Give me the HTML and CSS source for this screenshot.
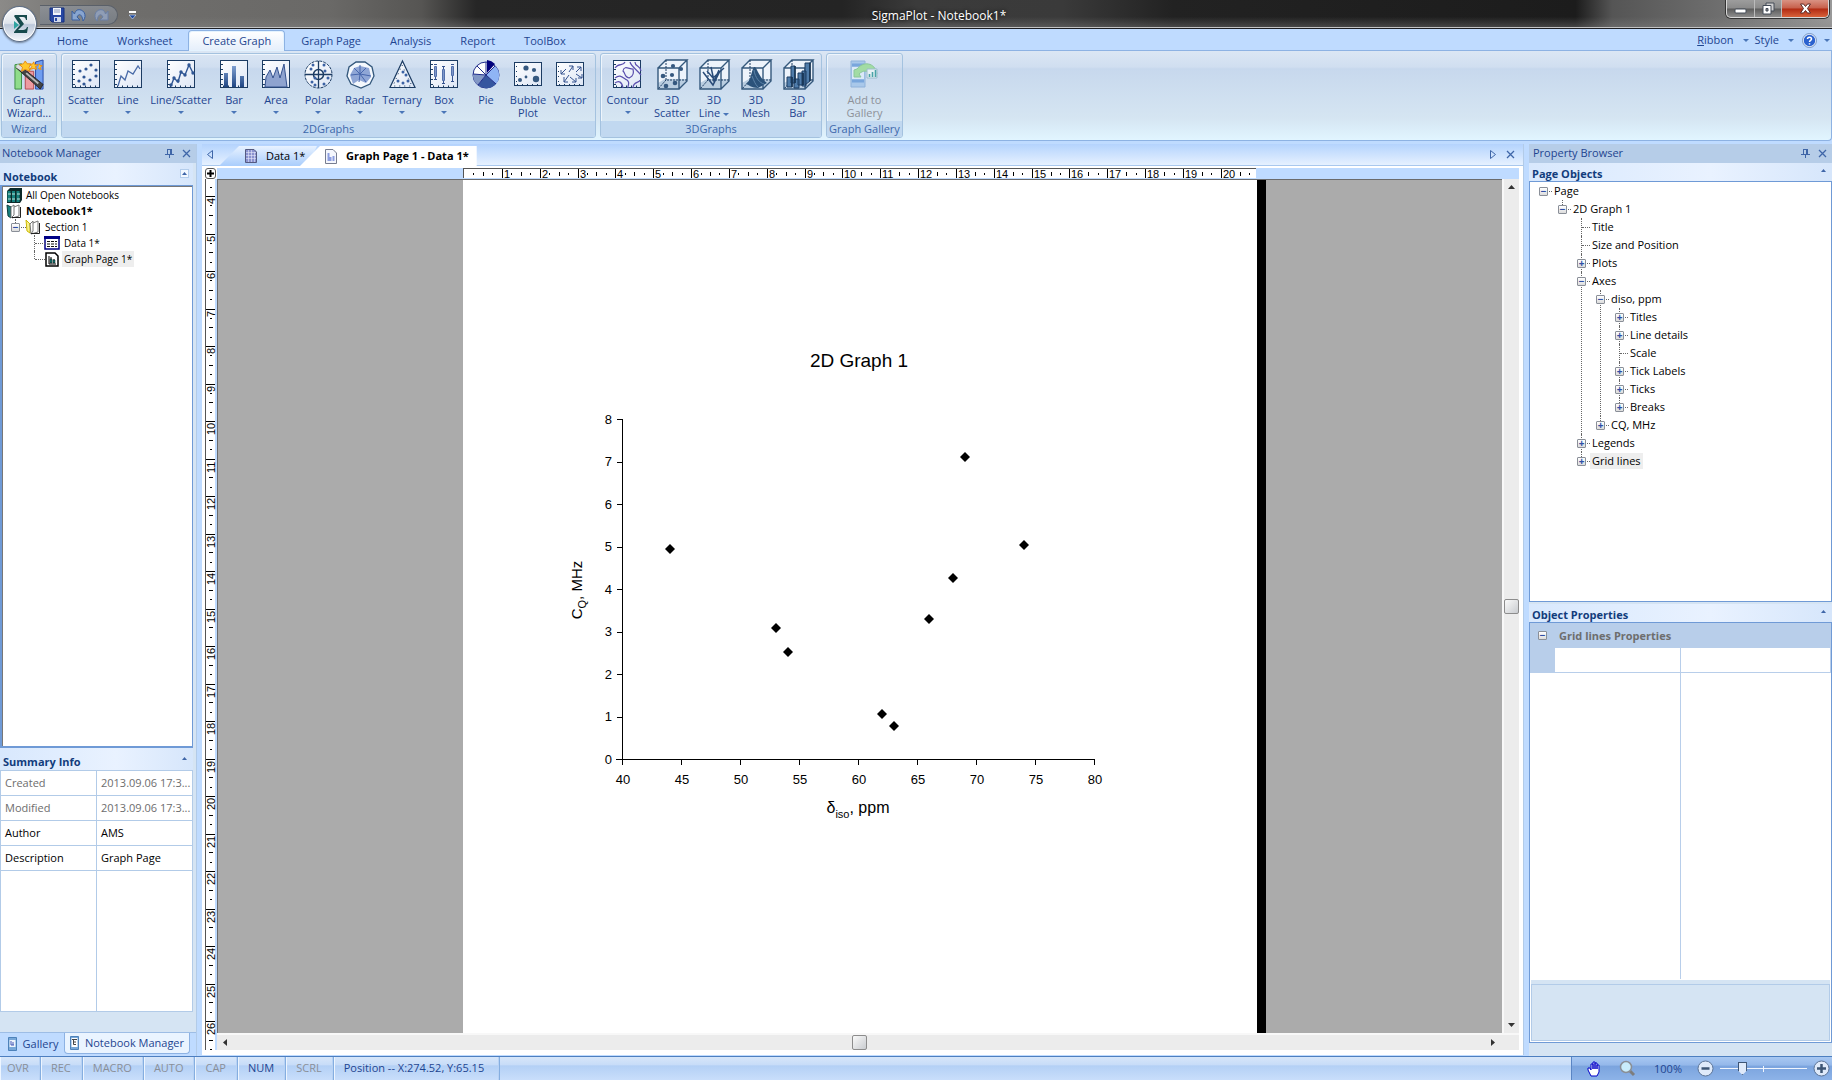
FILE: index.html
```html
<!DOCTYPE html>
<html lang="en">
<head>
<meta charset="utf-8">
<title>SigmaPlot - Notebook1*</title>
<link rel="stylesheet" href="styles.css">
</head>
<body>
<svg class="defs" aria-hidden="true">
  <defs>
    <linearGradient id="paper" x1="0" y1="0" x2="1" y2="1"><stop offset="0" stop-color="#fff"/><stop offset="1" stop-color="#dde6f5"/></linearGradient>
    <linearGradient id="barfill" x1="0" y1="0" x2="0" y2="1"><stop offset="0" stop-color="#7f9fd0"/><stop offset="1" stop-color="#1f4583"/></linearGradient>
    <g id="frame"><rect x=".5" y=".5" width="27" height="27" fill="url(#paper)" stroke="#1c3c63"/><path d="M3 26.500H27M2 4V26" stroke="#1c3c63" stroke-width="2" stroke-dasharray="1 4"/></g>
    <g id="cube"><path d="M1 8 8 1H30V22L23 30H1Z" fill="#edf3fb"/><path d="M1 24 8 20H30L23 30H1Z" fill="#b9cde0"/><path d="M1 9H22V30H1ZM1 9 9 1H30L22 9M30 1V22L22 30" fill="none" stroke="#34587c" stroke-width="1.400"/><path d="M9 1V21H30M9 21 1 30" fill="none" stroke="#1c3c63" stroke-dasharray="2 1"/></g>
    <g id="caret"><path d="M0 0H6L3 3Z" fill="#4a76b8"/></g>
  </defs>
</svg>

<header class="titlebar">
  <button class="orb" aria-label="Application menu"><svg width="36" height="36" viewBox="0 0 36 36"><path d="M13 9H25V14H24C23.500 12 23 11 21 11H17L22 18 16 24H21C23 24 24.500 23 25 21H26L25 27H12V26L18 19 12 10Z" fill="#174a4c"/><path d="M12 15 17 19 12 23Z" fill="#2fa3a0"/></svg></button>
  <div class="quick">
    <button aria-label="Save"><svg width="16" height="16" viewBox="0 0 16 16"><path d="M1 1H15V15H3L1 13Z" fill="#2747a3" stroke="#16307c"/><path d="M4 1H12V8H4Z" fill="#f4f6fb"/><path d="M5 3H11M5 5H11" stroke="#8c9bc0"/><path d="M5 10H12V15H5Z" fill="#cfd8ea"/><path d="M6 11H8V14H6Z" fill="#2747a3"/></svg></button>
    <button aria-label="Undo"><svg width="16" height="16" viewBox="0 0 16 16"><path d="M1 4V13H9L6 10C8 6 11 7 12 14 17 8 12 1 6 3 5 4 4 5 3.500 7Z" fill="#88a5d0" stroke="#3a5f9f"/></svg></button>
    <button aria-label="Redo"><svg width="16" height="16" viewBox="0 0 16 16"><path d="M15 4V13H7L10 10C8 6 5 7 4 14-1 8 4 1 10 3 11 4 12 5 12.500 7Z" fill="#8f9db5" stroke="#6a7fa5"/></svg></button>
  </div>
  <button class="quick-more" aria-label="Customize toolbar"><svg width="7" height="8" viewBox="0 0 7 8"><path d="M0 1H7" stroke="#fff" stroke-width="2"/><path d="M0 4H7L3.500 8Z" fill="#1e4ba0" stroke="#dfe9fa" stroke-width=".6"/></svg></button>
  <h1>SigmaPlot - Notebook1*</h1>
  <div class="window-buttons">
    <button aria-label="Minimize"><svg width="13" height="13"><rect x="1" y="7" width="11" height="4" rx="1" fill="#fff" stroke="#444c58"/></svg></button>
    <button aria-label="Restore"><svg width="13" height="13"><path d="M4 1H12V9H4Z" fill="#ccc" stroke="#444c58"/><path d="M1 3.500H9V12H1Z" fill="#fff" stroke="#444c58"/><path d="M4 6.500H6V9H4Z" fill="#888" stroke="#444c58"/></svg></button>
    <button class="close" aria-label="Close"><svg width="13" height="13"><path d="M1.500 2H4.500L6.500 4.500 8.500 2H11.500L8.500 6.500 11.500 11H8.500L6.500 8.500 4.500 11H1.500L4.500 6.500Z" fill="#fff" stroke="#5b2b28"/></svg></button>
  </div>
</header>

<nav class="tabs">
  <button>Home</button><button>Worksheet</button><button class="active">Create Graph</button><button>Graph Page</button><button>Analysis</button><button>Report</button><button>ToolBox</button>
  <div class="tabs-right">
    <button><span><u>R</u>ibbon</span> <svg width="6" height="3"><use href="#caret"/></svg></button>
    <button>Style <svg width="6" height="3"><use href="#caret"/></svg></button>
    <button class="help" aria-label="Help"><svg width="15" height="15" viewBox="0 0 15 15"><circle cx="7.500" cy="7.500" r="6.500" fill="#2b62cf" stroke="#e8f0fb" stroke-width="1.600"/><circle cx="7.500" cy="7.500" r="7" fill="none" stroke="#5b7fb5" stroke-width=".8"/><path d="M5.500 6C5.500 3.500 9.500 3.500 9.500 6 9.500 7.300 7.500 7.300 7.500 9M7.500 10.200V11.600" fill="none" stroke="#fff" stroke-width="1.500"/></svg><svg width="6" height="3"><use href="#caret"/></svg></button>
  </div>
</nav>

<section class="ribbon">
  <div class="group g-wizard">
    <div class="tools">
      <button class="tool"><svg width="34" height="32" viewBox="0 0 34 32"><path d="M2 5 9 4V31H2Z" fill="#8fdc8a" stroke="#3a8b41"/><path d="M13 12H22V31H13Z" fill="#ee9aa0" stroke="#b5444c"/><path d="M24 2 32 0V31H24Z" fill="#6f9df0" stroke="#2348a8"/><path d="M3 8 6 5 32 26 29 31Z" fill="#444" stroke="#222"/><path d="M4 6 11 11" stroke="#ddd" stroke-width="4"/><path d="M14 14 27 25" stroke="#bbb" stroke-width="2"/><path d="M13 1 15 4 19 4 17 8 18 12 13 10 9 12 10 8 7 5 11 4ZM22 2 23 5 27 5 24 7 25 10 22 9 18 10 20 7 18 5 21 4ZM28 4 29 6 31 6 29 8 30 10 27 9" fill="#ffc82e" stroke="#e58a11"/></svg><span>Graph<br>Wizard...</span></button>
    </div>
    <h2>Wizard</h2>
  </div>
  <div class="group g-2d">
    <div class="tools">
      <button class="tool"><svg width="29" height="29"><use href="#frame"/><g fill="#2f5694"><circle cx="8" cy="11" r="1.600"/><circle cx="14" cy="9" r="1.600"/><circle cx="19" cy="5" r="1.600"/><circle cx="24" cy="10" r="1.600"/><circle cx="24" cy="16" r="1.600"/><circle cx="12" cy="17" r="1.600"/><circle cx="18" cy="20" r="1.600"/><circle cx="7" cy="21" r="1.600"/><circle cx="12" cy="24" r="1.600"/></g></svg><span>Scatter</span><svg class="caret" width="6" height="3"><use href="#caret"/></svg></button>
      <button class="tool"><svg width="29" height="29"><use href="#frame"/><path d="M4 26 7 16 11 20 14 11 19 14 24 6 26 9" fill="none" stroke="#4a6ba8" stroke-width="1.300"/></svg><span>Line</span><svg class="caret" width="6" height="3"><use href="#caret"/></svg></button>
      <button class="tool wide"><svg width="29" height="29"><use href="#frame"/><path d="M4 26 7 18 11 22 14 12 18 15 22 5 26 13" fill="none" stroke="#2f5694" stroke-width="1.400"/><g fill="#2f5694"><circle cx="4" cy="25" r="1.700"/><circle cx="7" cy="18" r="1.700"/><circle cx="11" cy="21" r="1.700"/><circle cx="14" cy="12" r="1.700"/><circle cx="18" cy="15" r="1.700"/><circle cx="22" cy="5" r="1.700"/><circle cx="26" cy="13" r="1.700"/></g></svg><span>Line/Scatter</span><svg class="caret" width="6" height="3"><use href="#caret"/></svg></button>
      <button class="tool"><svg width="29" height="29"><use href="#frame"/><path d="M4 13H8V27H4ZM12 6H16V27H12ZM20 16H24V27H20Z" fill="url(#barfill)"/></svg><span>Bar</span><svg class="caret" width="6" height="3"><use href="#caret"/></svg></button>
      <button class="tool"><svg width="29" height="29"><use href="#frame"/><path d="M3 27 4 17 8 10 11 18 15 7 18 18 22 4 25 27Z" fill="#8ea3cf" stroke="#34528f"/></svg><span>Area</span><svg class="caret" width="6" height="3"><use href="#caret"/></svg></button>
      <button class="tool"><svg width="29" height="29"><circle cx="14.500" cy="14.500" r="13.500" fill="url(#paper)" stroke="#1c3c63" stroke-dasharray="3 1"/><circle cx="14.500" cy="14.500" r="5" fill="none" stroke="#1c3c63" stroke-width="1.500"/><path d="M1 14.500H28M14.500 1V28" stroke="#1c3c63" stroke-width="1.300"/><g fill="#3c62a4"><circle cx="9" cy="5" r="1.500"/><circle cx="20" cy="5" r="1.500"/><circle cx="7" cy="9" r="1.500"/><circle cx="21" cy="11" r="1.500"/><circle cx="11" cy="18" r="1.500"/><circle cx="24" cy="18" r="1.500"/><circle cx="8" cy="22" r="1.500"/><circle cx="11" cy="25" r="1.500"/><circle cx="20" cy="24" r="1.500"/></g></svg><span>Polar</span><svg class="caret" width="6" height="3"><use href="#caret"/></svg></button>
      <button class="tool"><svg width="29" height="29"><path d="M10 2H19L26 7 28 16 24 24 15 28 5 24 1 16 3 7Z" fill="#f4f8fd" stroke="#34587c" stroke-width="1.300"/><path d="M8 8 14 6 23 8 25 17 20 23 13 20 7 24 4 15Z" fill="#8fa6d6"/><path d="M14 14 8 8M14 14 20 8M14 14 25 16M14 14 20 22M14 14 13 22M14 14 5 15M14 14V5" stroke="#4766ac" fill="none"/></svg><span>Radar</span><svg class="caret" width="6" height="3"><use href="#caret"/></svg></button>
      <button class="tool"><svg width="29" height="29"><path d="M14.500 1 27 27.500H2Z" fill="url(#paper)" stroke="#1c3c63" stroke-width="1.200"/><path d="M14 5 24 26H5Z" fill="none" stroke="#1c3c63" stroke-dasharray="1 4"/><g fill="#3c62a4"><circle cx="15" cy="12" r="1.500"/><circle cx="18" cy="15" r="1.500"/><circle cx="10" cy="21" r="1.500"/><circle cx="15" cy="23" r="1.500"/><circle cx="20" cy="21" r="1.500"/></g></svg><span>Ternary</span><svg class="caret" width="6" height="3"><use href="#caret"/></svg></button>
      <button class="tool"><svg width="29" height="29"><use href="#frame"/><path d="M4 4.500H7M4 19.500H7M12 6.500H15M12 23.500H15M21 4.500H24M21 21.500H24" stroke="#34528f"/><path d="M4.500 6.500H6.500V16.500H4.500ZM12.500 9.500H14.500V20.500H12.500ZM21.500 6.500H23.500V15.500H21.500Z" fill="#7e97c9" stroke="#5370ac"/><path d="M5.500 17V20M13.500 7V9M13.500 21V24M22.500 16V22" stroke="#34528f"/></svg><span>Box</span><svg class="caret" width="6" height="3"><use href="#caret"/></svg></button>
      <button class="tool"><svg width="29" height="29"><circle cx="14" cy="15" r="13" fill="#fff" stroke="#1f2c8a"/><path d="M14 15 23 6A13 13 0 0 1 24 24Z" fill="#8fb4f5"/><path d="M14 15 24 24A13 13 0 0 1 6 25Z" fill="#35569f"/><path d="M14 15 6 25A13 13 0 0 1 1 14Z" fill="#8297c5"/><path d="M15 13V0A13 13 0 0 1 23 4Z" fill="#00007c"/><path d="M14 2V15M1 14 14 15 24 24M6 25 14 15 23 6M5 6 14 15" fill="none" stroke="#1f2c8a"/></svg><span>Pie</span></button>
      <button class="tool"><svg width="29" height="29"><g transform="translate(0 2)"><rect x=".5" y=".5" width="27" height="23" fill="url(#paper)" stroke="#1c3c63"/><path d="M3 22.500H27M2.500 4V22" stroke="#1c3c63" stroke-dasharray="1 4"/><g fill="#35587f"><circle cx="12" cy="6" r="2.600"/><circle cx="20" cy="8" r="2.100"/><circle cx="12" cy="15" r="1.400"/><circle cx="6" cy="18" r="2"/><circle cx="22" cy="17" r="3.200"/></g></g></svg><span>Bubble<br>Plot</span></button>
      <button class="tool"><svg width="29" height="29"><g transform="translate(0 2)"><rect x=".5" y=".5" width="27" height="23" fill="url(#paper)" stroke="#1c3c63"/><path d="M3 22.500H27M2.500 4V22" stroke="#1c3c63" stroke-dasharray="1 4"/><path d="M10 7 5 12V8M5 12H9M13 10 17 4H13M17 4V8M20 10 25 5H21M25 5V9M13 13 8 20V15M8 20H12M14 15 20 20H16M20 20V16M20 12 26 16H22M26 16V12" fill="none" stroke="#34528f"/></g></svg><span>Vector</span></button>
    </div>
    <h2>2DGraphs</h2>
  </div>
  <div class="group g-3d">
    <div class="tools">
      <button class="tool contour"><svg width="29" height="29"><use href="#frame"/><g fill="none" stroke="#5b4fae" stroke-width="1.200"><path d="M2 8C6 2 10 7 12 2M10 11C11 5 16 9 20 9 22 17 17 17 16 18 11 17 13 14 10 11ZM2 18C7 14 9 17 14 20 18 23 14 26 15 28M20 28C20 21 27 23 27 20M22 2C22 7 27 5 28 11M17 2C18 6 23 9 28 15M2 23C6 20 9 22 10 28"/></g></svg><span>Contour</span><svg class="caret" width="6" height="3"><use href="#caret"/></svg></button>
      <button class="tool"><svg class="big" width="31" height="31"><use href="#cube"/><g fill="#35587f"><circle cx="16" cy="7" r="2.100"/><circle cx="24" cy="10" r="2.100"/><circle cx="6" cy="17" r="2.300"/><circle cx="15" cy="16" r="2.100"/><circle cx="18" cy="24" r="2.300"/><circle cx="9" cy="27" r="2.300"/></g></svg><span>3D<br>Scatter</span></button>
      <button class="tool"><svg class="big" width="31" height="31"><use href="#cube"/><path d="M4 13 14 26 21 12M8 12 14 19 25 9M12 8 15 22 20 11" fill="none" stroke="#2a4c79" stroke-width="1.500"/></svg><span>3D<br>Line<svg class="inline-caret" width="6" height="3"><use href="#caret"/></svg></span></button>
      <button class="tool"><svg class="big" width="31" height="31"><use href="#cube"/><path d="M13 8C16 7 17 18 26 24L17 29C11 29 8 26 5 25 10 23 10 12 13 8Z" fill="#2b527a"/><path d="M13 11C14 19 19 24 23 25M11 17C13 22 14 25 17 28" stroke="#5d83a8" fill="none"/></svg><span>3D<br>Mesh</span></button>
      <button class="tool"><svg class="big" width="31" height="31"><use href="#cube"/><path d="M4 18H9V28H4ZM8 7H12V24H8ZM11 20H16V29H11ZM15 14H20V26H15ZM19 12H23V27H19ZM22 4H27V22L22 26Z" fill="#4f7caa" stroke="#1c3c63"/><path d="M12 7V24M9 18V28M27 4V22M20 14V26" stroke="#16324f" stroke-width="1.500"/></svg><span>3D<br>Bar</span></button>
    </div>
    <h2>3DGraphs</h2>
  </div>
  <div class="group g-gallery">
    <div class="tools">
      <button class="tool" disabled><svg width="29" height="29"><path d="M1 1H15V27H1Z" fill="#a9c8ea" stroke="#8fb2da"/><path d="M2 5H14M2 21H14" stroke="#79a6dc" stroke-width="3"/><path d="M2 7H14V19H2Z" fill="#dbe9f8"/><path d="M4 10V17H11L9 14C13 10 18 10 20 15L27 14C25 2 13 1 7 9Z" fill="#a2dca4" stroke="#8ac79a"/><path d="M17 9H27V18H17Z" fill="#e5f0f4" stroke="#9bbccc"/><path d="M19.500 17V14M22.500 17V12M25.500 17V10" stroke="#4aa3a8" stroke-width="1.600"/></svg><span>Add to<br>Gallery</span></button>
    </div>
    <h2>Graph Gallery</h2>
  </div>
</section>

<main class="workspace">
  <aside class="dock dock-left">
    <header class="dock-title"><h2>Notebook Manager</h2>
      <button aria-label="Pin"><svg width="9" height="9"><path d="M2.500 0V5M2 .5H7M6.500 0V5M5.500 0V5M0 5.500H9M4.500 5V9" stroke="#3f66a8" fill="none"/></svg></button>
      <button aria-label="Close"><svg width="9" height="9"><path d="M1 1 8 8M8 1 1 8" stroke="#3f66a8" stroke-width="1.300"/></svg></button>
    </header>
    <h3 class="section-title">Notebook <button class="boxed" aria-label="Collapse"><svg width="5" height="3"><path d="M0 3H5L2.500 0Z" fill="#3f66a8"/></svg></button></h3>
    <div class="tree-box notebook-box">
      <ul class="tree files">
        <li><span class="row"><svg width="16" height="15"><path d="M1 3 4 0H16V12L14 15H1Z" fill="#0c2a2a"/><path d="M1.500 3H4.500V14H1.500ZM6 3H9V14H6ZM10.500 3H13.500V14H10.500Z" fill="#17827f"/><path d="M2 6H5M6 6H9M11 6H14M2 11H5M6 11H9M11 11H14" stroke="#bfe4df"/></svg>All Open Notebooks</span></li>
        <li><span class="row bold"><svg width="16" height="15"><path d="M1 1 5 3V14L2 12Z" fill="#17827f" stroke="#0b3d3d"/><path d="M5 3 8 1V11L5 14ZM8 3 13 1V12L6 14" fill="#fff" stroke="#777"/><path d="M14.500 3V13.500H6" stroke="#222" fill="none"/></svg>Notebook1*</span>
          <ul>
            <li class="node last"><span class="row"><button class="exp" aria-label="Collapse Section 1">−</button><svg width="16" height="15"><path d="M1 0 5 4V13L2 11Z" fill="#f8f08a" stroke="#cbb800"/><path d="M5 4 8 1V11L6 14ZM8 3 13 1V12L6 14" fill="#fff" stroke="#777"/><path d="M14.500 3V13.500H6" stroke="#222" fill="none"/></svg>Section 1</span>
              <ul>
                <li class="node leaf"><span class="row"><svg width="16" height="14"><path d="M1 1H15V13H1Z" fill="#fff" stroke="#000084" stroke-width="1.500"/><path d="M0 1.500H16" stroke="#000084" stroke-width="3"/><path d="M3 5.500H13M3 8H13M3 10.500H13" stroke="#111" stroke-width="1.200" stroke-dasharray="3 1"/></svg>Data 1*</span></li>
                <li class="node leaf last"><span class="row"><svg width="16" height="15"><path d="M2 1H11L14 4V14H2Z" fill="#fff" stroke="#000" stroke-width="1.500"/><path d="M5 4V12H12M7 5V11M10 7V11" stroke="#000" fill="none"/><path d="M6 7H8V11H6ZM9 8H11V11H9Z" fill="#17827f" stroke="#000" stroke-width=".5"/></svg><mark>Graph Page 1*</mark></span></li>
              </ul>
            </li>
          </ul>
        </li>
      </ul>
    </div>
    <h3 class="section-title">Summary Info <button aria-label="Collapse"><svg width="5" height="3"><path d="M0 3H5L2.500 0Z" fill="#3f66a8"/></svg></button></h3>
    <table class="summary">
      <tr class="dim"><th scope="row">Created</th><td>2013.09.06 17:3...</td></tr>
      <tr class="dim"><th scope="row">Modified</th><td>2013.09.06 17:3...</td></tr>
      <tr><th scope="row">Author</th><td>AMS</td></tr>
      <tr><th scope="row">Description</th><td>Graph Page</td></tr>
      <tr class="filler"><td></td><td></td></tr>
    </table>
    <div class="dock-tabs">
      <button><svg width="9" height="14"><path d="M.5.5H8.500V13.500H.5Z" fill="#78a8d8" stroke="#4d82ba"/><path d="M1.500 3H7.500V10H1.500Z" fill="#eef4fc"/><path d="M3 4V8H6M5 5V8" stroke="#4659b5" fill="none"/></svg>Gallery</button>
      <button class="active"><svg width="9" height="14"><path d="M.5.5H8.500V13.500H.5Z" fill="#78a8d8" stroke="#4d82ba"/><path d="M1.500 2H7.500V11H1.500Z" fill="#fff"/><path d="M2 3.500H7M3.500 3V8.500H6M4 6H6" stroke="#444" fill="none"/></svg>Notebook Manager</button>
    </div>
  </aside>

  <section class="document">
    <div class="doc-tabs">
      <button class="arrow" aria-label="Previous tab"><svg width="6" height="9"><path d="M5.500.5V8.500L.5 4.500Z" fill="none" stroke="#3f66a8"/></svg></button>
      <button class="doc-tab back"><svg width="12" height="14"><path d="M.5.5H9L11.500 3V13.500H.5Z" fill="#8b93cf" stroke="#555a80"/><path d="M1 3.500H11M1 6.500H11M1 9.500H11M3.500 1V13M6.500 1V13M9.500 3V13" stroke="#e5e8fa" stroke-width=".6"/></svg>Data 1*</button>
      <button class="doc-tab front"><svg width="12" height="15"><path d="M.5.500H8L11.500 4V14.500H.5Z" fill="#f5f7fd" stroke="#777d90"/><path d="M3.500 4V12M5.500 8V12M8.500 7V12" stroke="#8d9ee0" stroke-width="2"/></svg>Graph Page 1 - Data 1*</button>
      <button class="arrow push" aria-label="Next tab"><svg width="6" height="9"><path d="M.5.5V8.500L5.500 4.500Z" fill="none" stroke="#3f66a8"/></svg></button>
      <button class="arrow" aria-label="Close tab"><svg width="9" height="9"><path d="M1 1 8 8M8 1 1 8" stroke="#3f66a8" stroke-width="1.300"/></svg></button>
    </div>
    <div class="doc-body">
      <button class="corner" aria-label="Ruler origin"><svg width="7" height="7"><path d="M3.500 0V7M0 3.500H7" stroke="#000" stroke-width="2"/></svg></button>
      <div class="ruler-top"><svg id="ruler-x" width="793" height="10"></svg></div>
      <div class="ruler-left"><svg id="ruler-y" width="10" height="100%"></svg></div>
      <div class="canvas">
        <div class="page">
          <svg class="plot" width="794" height="854" viewBox="0 0 794 854">
            <text class="plot-title" x="396" y="187">2D Graph 1</text>
            <path class="axis" d="M159.500 239V585M153 579.500H632" />
            <path class="axis" d="M154 239.500H159M154 282.500H159M154 324.500H159M154 367.500H159M154 409.500H159M154 452.500H159M154 494.500H159M154 537.500H159"/>
            <path class="axis" d="M218.500 580V585M277.500 580V585M336.500 580V585M395.500 580V585M454.500 580V585M513.500 580V585M572.500 580V585M631.500 580V585"/>
          </svg>
        </div>
      </div>
      <div class="scroll-y"><button aria-label="Scroll up"><svg width="7" height="4"><path d="M0 4H7L3.500 0Z" fill="#333"/></svg></button><i class="thumb"></i><button aria-label="Scroll down"><svg width="7" height="4"><path d="M0 0H7L3.500 4Z" fill="#333"/></svg></button></div>
      <div class="scroll-x"><button aria-label="Scroll left"><svg width="4" height="7"><path d="M4 0V7L0 3.500Z" fill="#333"/></svg></button><i class="thumb"></i><button aria-label="Scroll right"><svg width="4" height="7"><path d="M0 0V7L4 3.500Z" fill="#333"/></svg></button></div>
    </div>
  </section>

  <aside class="dock dock-right">
    <header class="dock-title"><h2>Property Browser</h2>
      <button aria-label="Pin"><svg width="9" height="9"><path d="M2.500 0V5M2 .5H7M6.500 0V5M5.500 0V5M0 5.500H9M4.500 5V9" stroke="#3f66a8" fill="none"/></svg></button>
      <button aria-label="Close"><svg width="9" height="9"><path d="M1 1 8 8M8 1 1 8" stroke="#3f66a8" stroke-width="1.300"/></svg></button>
    </header>
    <h3 class="section-title">Page Objects <button aria-label="Collapse"><svg width="5" height="3"><path d="M0 3H5L2.500 0Z" fill="#3f66a8"/></svg></button></h3>
    <div class="tree-box objects-box">
      <ul class="tree objects">
        <li class="node root"><span class="row"><button class="exp" aria-label="Collapse">−</button>Page</span>
          <ul><li class="node last"><span class="row"><button class="exp" aria-label="Collapse">−</button>2D Graph 1</span>
            <ul>
              <li class="node leaf"><span class="row">Title</span></li>
              <li class="node leaf"><span class="row">Size and Position</span></li>
              <li class="node"><span class="row"><button class="exp" aria-label="Expand">+</button>Plots</span></li>
              <li class="node"><span class="row"><button class="exp" aria-label="Collapse">−</button>Axes</span>
                <ul>
                  <li class="node"><span class="row"><button class="exp" aria-label="Collapse">−</button>diso, ppm</span>
                    <ul>
                      <li class="node"><span class="row"><button class="exp" aria-label="Expand">+</button>Titles</span></li>
                      <li class="node"><span class="row"><button class="exp" aria-label="Expand">+</button>Line details</span></li>
                      <li class="node leaf"><span class="row">Scale</span></li>
                      <li class="node"><span class="row"><button class="exp" aria-label="Expand">+</button>Tick Labels</span></li>
                      <li class="node"><span class="row"><button class="exp" aria-label="Expand">+</button>Ticks</span></li>
                      <li class="node last"><span class="row"><button class="exp" aria-label="Expand">+</button>Breaks</span></li>
                    </ul>
                  </li>
                  <li class="node last"><span class="row"><button class="exp" aria-label="Expand">+</button>CQ, MHz</span></li>
                </ul>
              </li>
              <li class="node"><span class="row"><button class="exp" aria-label="Expand">+</button>Legends</span></li>
              <li class="node last"><span class="row"><button class="exp" aria-label="Expand">+</button><mark>Grid lines</mark></span></li>
            </ul>
          </li></ul>
        </li>
      </ul>
    </div>
    <h3 class="section-title">Object Properties <button aria-label="Collapse"><svg width="5" height="3"><path d="M0 3H5L2.500 0Z" fill="#3f66a8"/></svg></button></h3>
    <div class="props">
      <div class="props-head"><button class="exp" aria-label="Collapse">−</button>Grid lines Properties</div>
      <div class="props-row"><i></i><i></i><i></i></div>
      <div class="props-rest"><i></i><i></i></div>
      <div class="props-help"></div>
    </div>
  </aside>
</main>

<footer class="status">
  <span>OVR</span><span>REC</span><span>MACRO</span><span>AUTO</span><span>CAP</span><span class="on">NUM</span><span>SCRL</span><span class="on pos">Position -- X:274.52, Y:65.15</span>
  <div class="zoom">
    <button aria-label="Pan"><svg width="14" height="16"><path d="M4 15 1 9V7H3L4 9V3H6V8 1H8V8 2H10V8 4H12V11L10 15Z" fill="#fff" stroke="#0000c8"/></svg></button>
    <button aria-label="Magnify"><svg width="17" height="17"><path d="M11 11 15 15" stroke="#7d7d7d" stroke-width="3"/><circle cx="7" cy="7" r="5.500" fill="#c9ecfb" stroke="#8a8f96" stroke-width="1.500"/></svg></button>
    <output>100%</output>
    <button aria-label="Zoom out"><svg width="17" height="17"><circle cx="8.500" cy="8.500" r="7.500" fill="#dfeafa" stroke="#5d7597"/><path d="M4.500 8.500H12.500" stroke="#3d5574" stroke-width="2.500"/></svg></button>
    <input type="range" min="0" max="100" value="23" aria-label="Zoom level">
    <button aria-label="Zoom in"><svg width="17" height="17"><circle cx="8.500" cy="8.500" r="7.500" fill="#dfeafa" stroke="#5d7597"/><path d="M4 8.500H13M8.500 4V13" stroke="#3d5574" stroke-width="2.500"/></svg></button>
  </div>
</footer>
<script src="app.js"></script>
</body>
</html>
```
FILE: styles.css
```css
* { box-sizing: border-box; }
body { margin: 0; height: 100vh; display: flex; flex-direction: column; overflow: hidden; background: #bfdbff; color: #000; font: 11px/16px "Open Sans", "Noto Sans", sans-serif; }
h1, h2, h3, ul { margin: 0; padding: 0; font-size: inherit; font-weight: normal; list-style: none; }
button { margin: 0; padding: 0; border: 0; background: none; font: inherit; color: inherit; display: flex; align-items: center; justify-content: center; }
svg { display: block; flex: none; }
.defs { position: absolute; width: 0; height: 0; }

/* Title bar */
.titlebar { position: relative; z-index: 2; flex: none; display: flex; align-items: flex-start; height: 29px; padding: 0 3px 0 2px; border-bottom: 1px solid #1d1f24; box-shadow: inset 0 -1px #c4c4c4; color: #fff;
  background: linear-gradient(#0000 60%, #8886), linear-gradient(90deg, #8b8a88 0, #6f6e6c 6%, #6a6967 18%, #565553 23%, #262626 26%, #242424 46%, #3b3b3b 50%, #3a3a3a 58%, #222 64%, #1c1c1c 86%, #555 88%, #6f6f6f 94%, #999 100%); }
.orb { width: 35px; height: 36px; margin-top: 6px; border-radius: 50%; border: 1px solid #5f6f86; background: linear-gradient(#fdfdfd, #dfe4ec 48%, #bcc8da 52%, #f4f7fb); box-shadow: 0 1px 2px #0006, inset 0 0 0 1px #fff; }
.quick { display: flex; gap: 6px; align-items: center; height: 20px; margin: 5px 0 0 3px; padding: 0 8px 0 9px; border: 1px solid #5a6069; border-left: 0; border-radius: 0 10px 10px 0; background: linear-gradient(#9197a0aa, #7a828caa); }
.quick-more { margin: 11px 0 0 11px; }
.titlebar h1 { flex: 1; text-align: center; padding: 8px 0 0 16px; font-size: 12px; text-shadow: 0 0 4px #000; }
.window-buttons { display: flex; width: 103px; height: 18px; border: 1px solid #d8d8d8; border-top: 0; border-radius: 0 0 5px 5px; overflow: hidden; background: linear-gradient(#9d9d9d, #8a8a8a 48%, #5c5c5c 52%, #8d8d8d); box-shadow: 0 0 0 1px #333; }
.window-buttons button { flex: 27; border-right: 1px solid #bbb; }
.window-buttons .close { flex: 46; border: 0; background: linear-gradient(#d99283, #c75f4a 48%, #b12a12 52%, #d8623a); }

/* Ribbon tabs */
.tabs { flex: none; display: flex; align-items: flex-end; height: 22px; gap: 3px; padding-left: 44px; color: #1e4590; border-bottom: 1px solid #8db2e3; }
.tabs > button { height: 19px; padding: 0 13px; }
.tabs > .active { height: 21px; margin-bottom: -1px; border: 1px solid #8db2e3; border-bottom: 0; border-radius: 4px 4px 0 0; background: linear-gradient(#fff, #e4eefb); box-shadow: inset 0 0 0 1px #e4f3ff; }
.tabs-right { display: flex; gap: 6px; margin-left: auto; padding-right: 2px; height: 20px; }
.tabs-right button { gap: 9px; }
.tabs-right .help { gap: 7px; margin-left: 2px; }

/* Ribbon */
.ribbon { flex: none; display: flex; gap: 4px; height: 90px; padding: 2px 2px 2px 1px; border: 1px solid #8db2e3; border-top: 0; border-left: 0; border-radius: 0 0 4px; background: linear-gradient(#dbe6f4, #d0def0 18%, #c7d8ed 20%, #d5e5f2 75%, #e1f5ff); color: #1e4590; }
.group { display: flex; flex-direction: column; border: 1px solid #a4c2df; border-radius: 3px; box-shadow: inset 1px 1px #eef5fc; overflow: hidden; }
.group h2 { height: 16px; line-height: 16px; text-align: center; white-space: nowrap; background: #c1d8f0; color: #3d68ab; }
.tools { flex: 1; display: flex; padding-left: 3px; }
.g-wizard { width: 56px; } .g-2d { width: 535px; } .g-3d { width: 222px; } .g-gallery { width: 77px; }
.g-wizard .tools, .g-gallery .tools { justify-content: center; padding: 0; }
.tool { width: 42px; flex-direction: column; justify-content: flex-start; padding-top: 5px; line-height: 13px; white-space: nowrap; }
.tool > svg:first-child { height: 31px; margin-bottom: 3px; padding-top: 1px; overflow: visible; }
.tool > svg.big { padding: 0; }
.tool.wide { width: 64px; } .tool.contour { width: 47px; }
.tool .caret { margin-top: 5px; }
.inline-caret { display: inline-block; margin-left: 3px; vertical-align: middle; }
.tool:disabled { width: 60px; color: #8d9199; }

/* Docked panes */
.workspace { flex: 1; min-height: 0; display: grid; grid-template-columns: 197px 1fr 303px; column-gap: 5px; padding-top: 3px; }
.dock { display: flex; flex-direction: column; min-height: 0; background: #d5e4f3; }
.dock-left { padding-right: 3px; border-right: 1px solid #b2cbe8; }
.dock-title { flex: none; display: flex; gap: 8px; height: 19px; margin-right: -3px; padding: 0 5px 1px 2px; background: #b6cde8; color: #1e4590; align-items: center; }
.dock-right .dock-title { margin-right: 0; padding-left: 4px; }
.dock-title h2 { flex: 1; }
.section-title { flex: none; display: flex; justify-content: space-between; height: 22px; padding: 6px 4px 0 3px; font-weight: bold; color: #123c7c; background: linear-gradient(90deg, #d8e8fd, #e9f2ff 60%, #d6e6fb); }
.section-title button { width: 9px; height: 9px; }
.section-title .boxed { border: 1px solid #b3cdec; background: #f2f8ff; }
.dock-right .section-title { height: 18px; padding-top: 3px; }
.tree-box { background: #fff; border: 1px solid #6f9ad6; min-height: 0; overflow: hidden; }
.notebook-box { flex: 563; border-width: 1px 1px 2px 2px; box-shadow: inset 1px 1px #777; padding-top: 1px; font-size: 10px; }
.dock-left .section-title + .summary { flex: 243; }

.tree ul { margin-left: 19px; }
.node { position: relative; }
.node::before { content: ""; position: absolute; left: 13px; top: 0; bottom: 0; border-left: 1px dotted #666; }
.node.last::before { bottom: auto; height: 9px; }
.root::before { display: none; }
.row { position: relative; display: flex; align-items: center; height: 18px; padding-left: 24px; white-space: nowrap; }
.node > .row::before { content: ""; position: absolute; left: 14px; top: 9px; width: 8px; border-top: 1px dotted #666; }
.row .exp { position: absolute; left: 9px; top: 5px; }
.exp { z-index: 1; width: 9px; height: 9px; border: 1px solid #8a8f98; border-radius: 1px; background: linear-gradient(#fff, #dcdcdc); color: #2f4fa5; font-size: 10px; line-height: 7px; font-weight: bold; }
mark { background: #eee; color: inherit; padding: 0 2px; margin-left: -2px; }
.bold { font-size: 11px; font-weight: bold; }
.files .row { height: 16px; gap: 4px; padding-left: 4px; }
.files > li > ul { margin-left: 0; }
.files ul .row { padding-left: 23px; }
.files .exp { top: 4px; }
.files .node > .row::before { top: 8px; width: 10px; }
.files .node.last::before { height: 8px; }

.summary { border: 1px solid #6f9ad6; border-collapse: collapse; background: #fff; width: 100%; table-layout: fixed; margin-bottom: 20px; }
.summary th, .summary td { height: 25px; padding: 0 0 0 4px; text-align: left; font-weight: normal; border: 1px solid #b2cbe8; white-space: nowrap; overflow: hidden; }
.dim { color: #6d6d6d; }
.summary .filler td { height: auto; }
.dock-tabs { flex: none; display: flex; height: 24px; margin-right: -3px; padding: 0 6px 2px 2px; border-top: 1px solid #9dbde5; background: #bfdbff; color: #1e4590; }
.dock-tabs button { flex: 1; gap: 6px; padding: 0 4px; white-space: nowrap; }
.dock-tabs .active { flex: none; width: 126px; border: 1px solid #8db2e3; border-top: 0; border-radius: 0 0 4px 4px; background: #eaf4ff; }

/* Document area */
.document { display: flex; flex-direction: column; min-width: 0; min-height: 0; background: #fff; border-right: 1px solid #b2cbe8; margin-bottom: 1px; }
.doc-tabs { flex: none; display: flex; align-items: stretch; height: 22px; padding-right: 5px; border-bottom: 1px solid #a9c8ee; background: linear-gradient(#b4d3fd, #e6f1ff); }
.doc-tabs .arrow { width: 15px; }
.doc-tabs .push { margin-left: auto; margin-right: 3px; }
.doc-tab { justify-content: flex-start; gap: 9px; height: 20px; margin-top: 2px; color: #000; white-space: nowrap; }
.doc-tab.back { width: 98px; padding-left: 26px; clip-path: polygon(20px 0, 100% 0, calc(100% - 10px) 100%, 0 100%); background: linear-gradient(#e8f2ff, #a9cdfc); margin-left: 2px; }
.doc-tab.front { margin-left: -17px; padding: 0 8px 0 25px; font-weight: bold; background: #fff; clip-path: polygon(20px 0, 100% 0, 100% 100%, 0 100%); }
.doc-body { flex: 1; min-height: 0; display: grid; grid-template: 11px 1fr 17px / 12px 1fr 17px; padding: 2px 4px 5px 3px; }
.corner { width: 11px; height: 11px; border: 1px solid #555; border-radius: 3px; background: #fff; }
.ruler-top { grid-column: 2 / 4; background: #bfdbff; padding-left: 246px; min-width: 0; }
.ruler-left { grid-row: 2 / 4; background: #bfdbff; min-height: 0; }
.ruler-top svg, .ruler-left svg { background: #fff; font: 11px "Liberation Sans", sans-serif; overflow: visible; }
.ruler-top svg { border: 1px solid #555; border-width: 1px 0 0 1px; }
.ruler-left svg { border-left: 1px solid #555; }
.canvas { min-width: 0; min-height: 0; overflow: hidden; background: #ababab; border: 2px solid #6b6b6b; border-width: 1px 0 0 1px; padding-left: 245px; }
.page { width: 803px; height: 100%; background: #fff; border-right: 9px solid #000; overflow: hidden; }
.plot { font: 13px "Liberation Sans", sans-serif; }
.axis { stroke: #000; fill: none; }
.plot-title { font-size: 19px; text-anchor: middle; }
.tick-x { text-anchor: middle; } .tick-y { text-anchor: end; }
.axis-title { font-size: 16px; text-anchor: middle; }
.axis-title.y { font-size: 15px; }
.sub { font-size: 11px; }
.scroll-y, .scroll-x { display: flex; align-items: center; background: #ececec; }
.scroll-y { flex-direction: column; border-left: 2px solid #f8f8f8; }
.scroll-y button, .scroll-x button { width: 16px; height: 16px; }
.thumb { display: block; width: 15px; height: 15px; margin: auto; border: 1px solid #8c8c8c; border-radius: 2px; background: linear-gradient(135deg, #fafafa, #c9ccd0); }
.scroll-x { grid-column: 2 / 4; border-top: 2px solid #f8f8f8; padding-right: 18px; }

/* Property panes */
.objects-box { flex: 421; margin-bottom: 2px; }
.props { flex: 421; margin-bottom: 13px; display: flex; flex-direction: column; background: #fff; border: 1px solid #6f9ad6; }
.props i { display: block; }
.props-head { flex: none; display: flex; align-items: center; gap: 12px; height: 25px; padding: 0 8px; background: #b8ceea; color: #6d6d6d; font-weight: bold; }
.props-row { flex: none; display: grid; grid-template-columns: 25px 126px 1fr; height: 25px; background: #b8ceea; }
.props-row i + i { background: #fff; border-bottom: 1px solid #b8ceea; border-right: 1px solid #b8ceea; }
.props-rest { flex: 1; display: grid; grid-template-columns: 151px 1fr; }
.props-rest i:first-child { border-right: 1px solid #b8ceea; }
.props-help { flex: none; height: 61px; margin: 1px; background: #d5e4f3; border-top: 4px solid #d5e4f3; box-shadow: inset 0 0 0 1px #b2cbe8; }

/* Status bar */
.status { flex: none; display: flex; align-items: stretch; height: 24px; border-top: 1px solid #4d7fc0; color: #8a8f98; background: linear-gradient(#d7e6f9, #c7dcf8 35%, #b3d0f5 38%, #c9defb); }
.status > span { display: flex; align-items: center; padding: 0 11px 1px 10px; white-space: nowrap; border-right: 1px solid #85aee0; box-shadow: inset -1px 0 #b8d2f4, inset 1px 0 #edf5ff; }
.status > span:first-child { padding-left: 7px; }
.status .on { color: #1e4590; }
.status .pos { padding-right: 15px; }
.zoom { display: flex; align-items: center; gap: 8px; margin-left: auto; width: 261px; padding: 0 2px 0 13px; color: #1e4590; border-left: 1px solid #5a85c4; background: linear-gradient(#a8c8f2, #94b8ea 35%, #7ba4de 40%, #8db3e8); }
.zoom button { width: 17px; } .zoom button + button { margin-left: 9px; }
.zoom output { width: 38px; text-align: center; margin: 0 2px 0 5px; }
.zoom input { appearance: none; flex: 1; min-width: 0; height: 18px; margin: 0 -2px; background: linear-gradient(#f0f5fd, #f0f5fd) 50% 50% / 100% 1px no-repeat, linear-gradient(#f0f5fd, #f0f5fd) 50% 50% / 1px 6px no-repeat; }
.zoom input::-webkit-slider-thumb { appearance: none; width: 9px; height: 13px; border: 1px solid #3d5574; background: #dfeafa; clip-path: polygon(0 0, 100% 0, 100% 65%, 50% 100%, 0 65%); }
```
FILE: app.js
```js
const NS = "http://www.w3.org/2000/svg";

function add(parent, name, attrs, text) {
  const el = document.createElementNS(NS, name);
  for (const key in attrs) el.setAttribute(key, attrs[key]);
  if (text !== undefined) el.textContent = text;
  parent.appendChild(el);
  return el;
}

// Centimetre rulers: full line per unit, short line per half, dot per quarter.
function drawRuler(svg, vertical, origin, step, from, to) {
  const mark = (pos, a, b) => vertical
    ? add(svg, "rect", { x: a, y: Math.round(pos), width: b - a, height: 1 })
    : add(svg, "rect", { x: Math.round(pos), y: a, width: 1, height: b - a });
  for (let n = from; n <= to; n++) {
    const p = origin + n * step;
    if (n > 0 && p > 0) {
      mark(p, 0, 9);
      const r = Math.round(p);
      if (vertical) add(svg, "text", { transform: `translate(9 ${r + (n > 9 ? 14 : 8)}) rotate(-90)` }, n);
      else add(svg, "text", { x: r + 2, y: 9 }, n);
    }
    const dots = [[1 / 4, 4, 6], [1 / 2, 3, 7], [3 / 4, 4, 6]];
    for (const [part, a, b] of dots) {
      const q = p + step * part;
      if (q > 0 && !(n > 9 && part === 1 / 4)) mark(q, a, b);
    }
  }
}
drawRuler(document.getElementById("ruler-x"), false, 0, 37.84, 0, 20);
drawRuler(document.getElementById("ruler-y"), true, -133, 37.5, 3, 26);

// Scatter plot
const plot = document.querySelector(".plot");
const sx = v => 159.5 + (v - 40) * 11.8;
const sy = v => 579.5 - v * 42.5;
for (let v = 40; v <= 80; v += 5) add(plot, "text", { class: "tick-x", x: Math.round(sx(v)), y: 604 }, v);
for (let v = 0; v <= 8; v++) add(plot, "text", { class: "tick-y", x: 149, y: Math.round(sy(v)) + 4 }, v);
const points = [[44, 4.96], [53, 3.1], [54, 2.52], [62, 1.08], [63, 0.78], [66, 3.3], [68, 4.27], [69, 7.12], [74, 5.04]];
for (const [x, y] of points) {
  const cx = Math.round(sx(x)), cy = Math.round(sy(y));
  add(plot, "path", { d: `M${cx - 5} ${cy}L${cx} ${cy - 5}L${cx + 5} ${cy}L${cx} ${cy + 5}Z` });
}
const xt = add(plot, "text", { class: "axis-title", x: 395, y: 633 }, "δ");
add(xt, "tspan", { class: "sub", dy: 5 }, "iso");
add(xt, "tspan", { dy: -5 }, ", ppm");
const yt = add(plot, "text", { class: "axis-title y", transform: "translate(119 410) rotate(-90)" }, "C");
add(yt, "tspan", { class: "sub", dy: 4 }, "Q");
add(yt, "tspan", { dy: -4 }, ", MHz");
```
